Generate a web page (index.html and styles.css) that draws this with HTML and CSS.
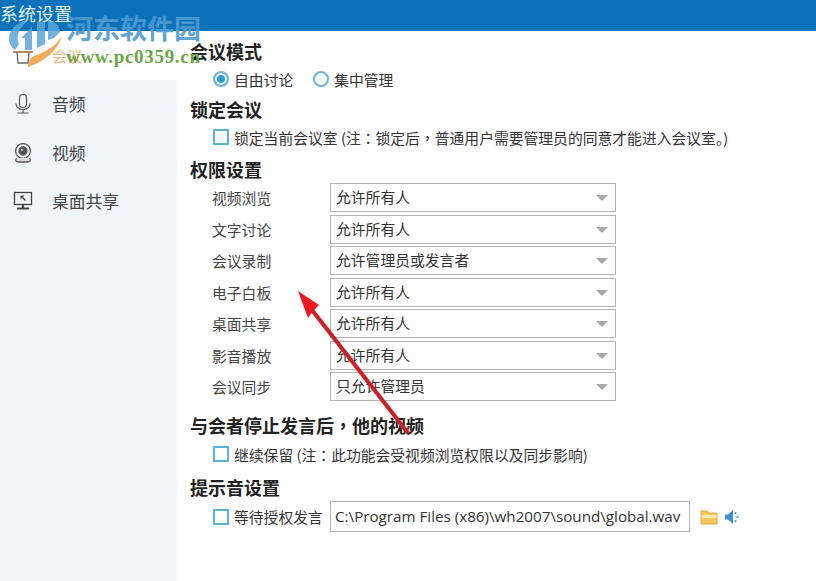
FILE: index.html
```html
<!DOCTYPE html>
<html lang="zh-CN">
<head>
  <meta charset="UTF-8">
  <meta name="viewport" content="width=device-width, initial-scale=1.0">
  <title>系统设置</title>
  <link rel="stylesheet" href="styles.css">
</head>
<body>
  <div class="window">
    <header class="titlebar">系统设置</header>
    <div class="content">
      <nav class="sidebar">
        <div class="nav-item active">
          <svg class="nav-icon" viewBox="0 0 20 20" fill="none" stroke="#666" stroke-width="1.3">
            <path d="M0 6h20" stroke="#a5702c" stroke-width="1.600"/>
            <path d="M4 6l1 11h10l1-11"/>
          </svg>
          <span>会议</span>
        </div>
        <div class="nav-item">
          <svg class="nav-icon" viewBox="0 0 20 20" fill="none" stroke="#555" stroke-width="1.200">
            <rect x="6.500" y="0.500" width="7" height="13" rx="3.500"/>
            <path d="M3 9.500c0 4 3 6 7 6s7-2 7-6M10 15.500v3M4.500 19h11"/>
          </svg>
          <span>音频</span>
        </div>
        <div class="nav-item">
          <svg class="nav-icon" viewBox="0 0 20 20" fill="none" stroke="#555" stroke-width="1.300">
            <circle cx="10" cy="8" r="7.400"/>
            <circle cx="10" cy="8" r="4" fill="#555"/>
            <circle cx="8.800" cy="6.800" r="1" fill="#eee" stroke="none"/>
            <path d="M3.500 15c-2 3 0 4 2 4h9c2 0 4-1 2-4" stroke-width="1.300" fill="#ddd"/>
          </svg>
          <span>视频</span>
        </div>
        <div class="nav-item">
          <svg class="nav-icon" viewBox="0 0 20 20" fill="none" stroke="#444" stroke-width="1.300">
            <rect x="1.500" y="1.500" width="17" height="12"/>
            <path d="M4 17.500h12M10 14v3" stroke-width="2.200"/>
            <path d="M8.500 5.500l4 4" stroke-width="1.400"/>
            <path d="M7.500 4.500h4l-4 4z" fill="#444" stroke="none"/>
          </svg>
          <span>桌面共享</span>
        </div>
      </nav>

      <main class="settings">
        <h2>会议模式</h2>
        <div class="option-row">
          <label class="choice"><i class="radio checked"></i>自由讨论</label>
          <label class="choice"><i class="radio"></i>集中管理</label>
        </div>

        <h2>锁定会议</h2>
        <div class="option-row">
          <label class="choice"><i class="check"></i><span>锁定当前会议室 (注<span class="punct" lang="zh-TW">：</span>锁定后<span class="punct" lang="zh-TW">，</span>普通用户需要管理员的同意才能进入会议室。)</span></label>
        </div>

        <h2 class="perm-title">权限设置</h2>
        <div class="perm-list">
          <div class="perm-row"><span class="perm-label">视频浏览</span><div class="select">允许所有人</div></div>
          <div class="perm-row"><span class="perm-label">文字讨论</span><div class="select">允许所有人</div></div>
          <div class="perm-row"><span class="perm-label">会议录制</span><div class="select">允许管理员或发言者</div></div>
          <div class="perm-row"><span class="perm-label">电子白板</span><div class="select">允许所有人</div></div>
          <div class="perm-row"><span class="perm-label">桌面共享</span><div class="select">允许所有人</div></div>
          <div class="perm-row"><span class="perm-label">影音播放</span><div class="select">允许所有人</div></div>
          <div class="perm-row"><span class="perm-label">会议同步</span><div class="select">只允许管理员</div></div>
        </div>

        <h2 class="after-list">与会者停止发言后<span class="punct" lang="zh-TW">，</span>他的视频</h2>
        <div class="option-row">
          <label class="choice"><i class="check"></i><span>继续保留 (注<span class="punct" lang="zh-TW">：</span>此功能会受视频浏览权限以及同步影响)</span></label>
        </div>

        <h2 class="sound-title">提示音设置</h2>
        <div class="sound-row">
          <label class="choice sound-choice"><i class="check"></i>等待授权发言</label>
          <div class="path-box">C:\Program Files (x86)\wh2007\sound\global.wav</div>
          <svg class="tool-icon" viewBox="0 0 18 16">
            <path d="M1 2h6l1.500 2H17v11H1z" fill="#f8c65c" stroke="#e6a640"/>
            <path d="M1.500 6h15v3h-15z" fill="#fdeab6"/>
          </svg>
          <svg class="tool-icon sound" viewBox="0 0 16 16" fill="#3d8fd0">
            <path d="M1 5.500h3L9 1v14l-5-4.500H1z"/>
            <circle cx="11.500" cy="4" r="1"/>
            <circle cx="13.500" cy="8" r="1.100"/>
            <circle cx="11.500" cy="12" r="1"/>
          </svg>
        </div>
      </main>
    </div>
  </div>

  <!-- 图片水印和红色箭头都压在内容上面 -->
  <svg class="arrow" viewBox="0 0 816 581">
    <path d="M408 433L312 310" stroke="#cb1f26" stroke-width="4" fill="none"/>
    <path d="M298 291L319 305L313 311L308 318z" fill="#ee1822"/>
  </svg>
  <div class="watermark">
    <svg class="wm-logo" viewBox="0 0 70 75">
      <path d="M15 50C4 42 8 24 30 19C20 26 15 36 19 44z" fill="#5aa5d8" opacity="0.85"/>
      <path d="M21 38L32 27V50H25V38z" fill="#5aa5d8" opacity="0.85"/>
      <path d="M37 22H45V44L37 48z" fill="#5aa5d8" opacity="0.85"/>
      <path d="M48 20C56 22 60 26 60 32L54 38L48 40z" fill="#5aa5d8" opacity="0.85"/>
      <path d="M62 36C58 50 44 62 28 67C28 62 30 58 34 56C46 52 56 46 62 36z" fill="#f3a04a" opacity="0.9"/>
    </svg>
    <span class="wm-name">河东软件园</span>
    <span class="wm-url">www.pc0359.cn</span>
  </div>
</body>
</html>
```

FILE: styles.css
```css
* {
  box-sizing: border-box;
}
body {
  margin: 0;
  width: 816px;
  height: 581px;
  overflow: hidden;
  background: #fff;
  color: #333;
  font-family: "Noto Sans CJK SC", "Noto Sans", sans-serif;
  font-size: 14.800px;
  position: relative;
}
.window {
  height: 100%;
  display: flex;
  flex-direction: column;
}
.titlebar {
  height: 31px;
  flex-shrink: 0;
  background: #0b72b9;
  color: #e8f2fa;
  font-size: 18px;
  line-height: 27px;
}
.content {
  flex: 1;
  display: flex;
  min-height: 0;
}
.sidebar {
  width: 177px;
  flex-shrink: 0;
  background: #f0f5fb;
}
.nav-item {
  height: 48.500px;
  padding-left: 13px;
  display: flex;
  align-items: center;
  gap: 19px;
  color: #444;
  font-size: 16.800px;
}
.nav-item.active {
  height: 49px;
  background: #fff;
  color: #f0b27a;
  font-size: 15px;
}
.nav-icon {
  width: 20px;
  height: 20px;
}
.settings {
  flex: 1;
  padding: 8px 0 0 13px;
}
h2 {
  margin: 0;
  height: 24px;
  font-size: 18px;
  line-height: 24px;
  font-weight: bold;
  color: #222;
}
/* 中文标点居中的字形，跟截图里的一样 */
.punct {
  font-family: "Noto Sans CJK TC", sans-serif;
}
.option-row {
  height: 24px;
  margin: 4px 0 6px;
  padding-left: 23px;
  display: flex;
  align-items: center;
  gap: 20px;
}
.choice {
  display: flex;
  align-items: center;
  gap: 5px;
  white-space: nowrap;
}
.radio {
  width: 16px;
  height: 16px;
  border: 2px solid #6db6d9;
  border-radius: 50%;
  display: block;
}
.radio.checked {
  background: #2a9fd0;
  box-shadow: inset 0 0 0 2px #fff;
}
.check {
  width: 16px;
  height: 16px;
  border: 2px solid #55b5de;
  display: block;
}
.perm-title {
  margin: 8px 0 2px;
}
.perm-list {
  padding-left: 22px;
  display: grid;
  row-gap: 2.500px;
}
.perm-row {
  display: flex;
  align-items: center;
}
.perm-label {
  width: 118px;
  color: #444;
}
.select {
  width: 286px;
  height: 29px;
  padding-left: 5px;
  border: 1px solid #b4b4b4;
  line-height: 26px;
  position: relative;
}
.select::after {
  content: "";
  position: absolute;
  right: 7px;
  top: 11px;
  border-top: 6px solid #a8a8a8;
  border-left: 6px solid transparent;
  border-right: 6px solid transparent;
}
.after-list {
  margin: 12px 0 5px;
}
.sound-title {
  margin-top: 9px;
}
.sound-row {
  margin-top: 2px;
  padding-left: 23px;
  display: flex;
  align-items: center;
}
.sound-choice {
  width: 117px;
}
.path-box {
  width: 360px;
  height: 31px;
  padding-left: 4px;
  border: 1px solid #b4b4b4;
  font-family: "Open Sans", sans-serif;
  font-size: 15.200px;
  line-height: 28px;
  white-space: nowrap;
  overflow: hidden;
}
.tool-icon {
  width: 18px;
  height: 16px;
  margin-left: 10px;
}
.tool-icon.sound {
  margin-left: 5px;
}
.arrow {
  position: absolute;
  left: 0;
  top: 0;
  width: 816px;
  height: 581px;
  pointer-events: none;
}
.watermark {
  position: absolute;
  left: 0;
  top: 0;
  width: 240px;
  height: 80px;
  pointer-events: none;
}
.wm-logo {
  position: absolute;
  left: 0;
  top: 0;
  width: 70px;
  height: 75px;
}
.wm-name {
  position: absolute;
  left: 66px;
  top: 11px;
  font-size: 27px;
  line-height: 34px;
  font-weight: bold;
  color: #4f9bd3;
  opacity: 0.9;
  white-space: nowrap;
}
.wm-url {
  position: absolute;
  left: 66px;
  top: 45px;
  font-family: "Liberation Serif", serif;
  font-size: 19px;
  line-height: 24px;
  font-weight: bold;
  letter-spacing: 0.700px;
  color: #6ca644;
  white-space: nowrap;
}
```
